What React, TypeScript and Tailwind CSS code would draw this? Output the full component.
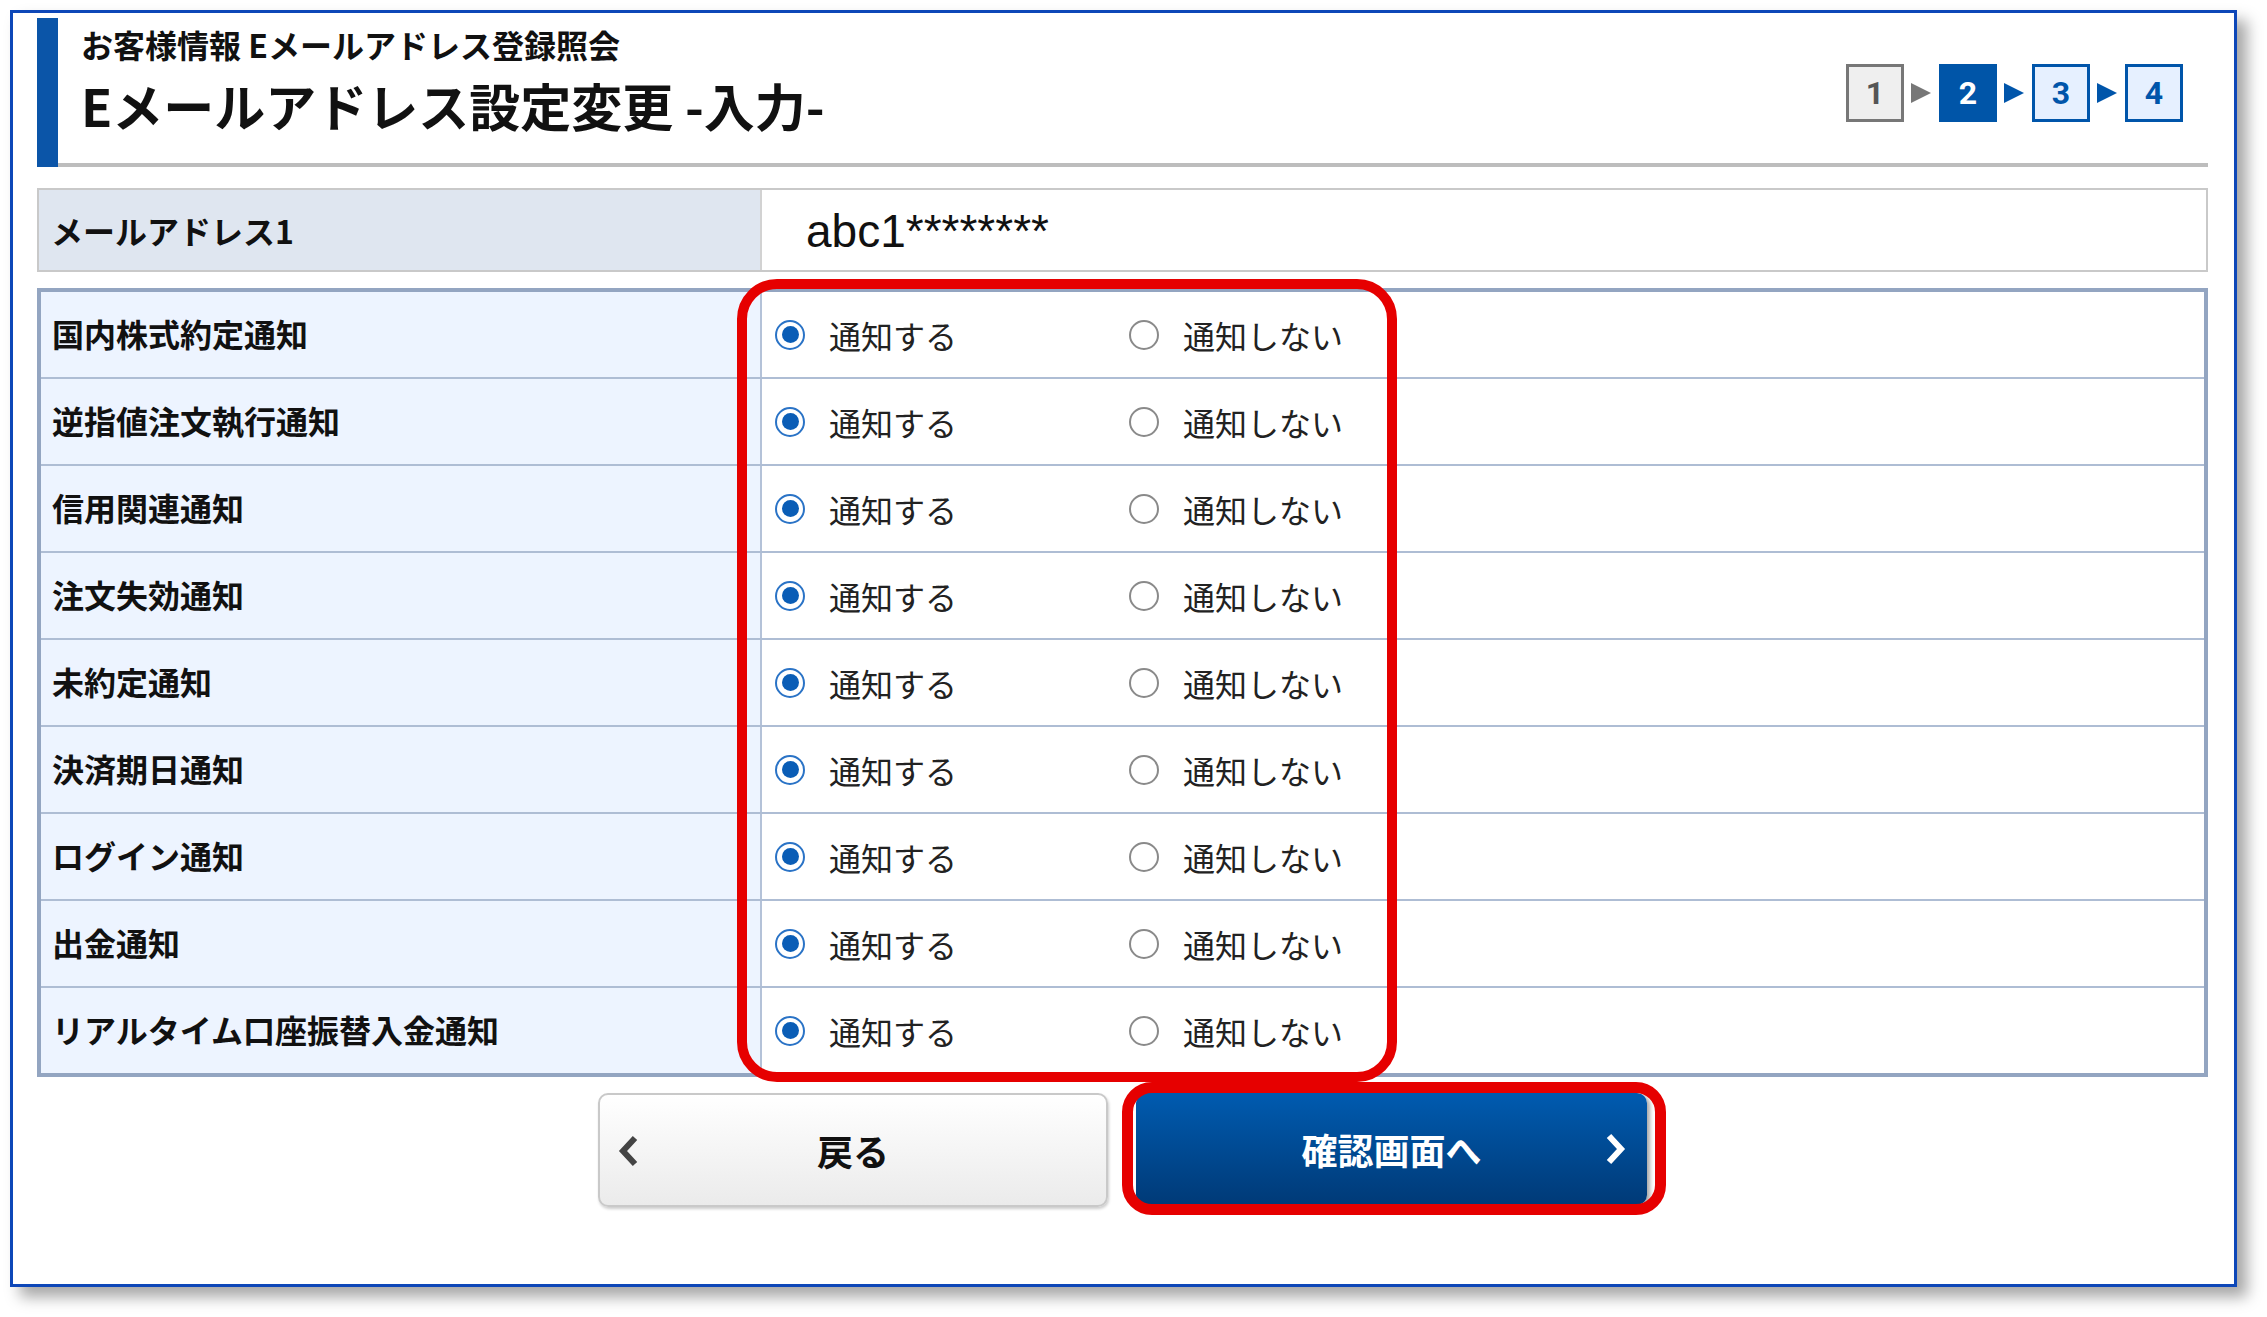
const rows = [
  '国内株式約定通知',
  '逆指値注文執行通知',
  '信用関連通知',
  '注文失効通知',
  '未約定通知',
  '決済期日通知',
  'ログイン通知',
  '出金通知',
  'リアルタイム口座振替入金通知',
];

function Radio({ checked }: { checked: boolean }) {
  if (checked) {
    return (
      <span className="flex h-[30px] w-[30px] shrink-0 items-center justify-center rounded-full border-2 border-[#2a73c6] bg-white">
        <span className="h-[17px] w-[17px] rounded-full bg-[#0a5db6]" />
      </span>
    );
  }
  return <span className="h-[30px] w-[30px] shrink-0 rounded-full border-2 border-[#8a8a8a] bg-white" />;
}

function Arrow({ color }: { color: string }) {
  return (
    <svg width="20" height="20" viewBox="0 0 20 20" className="ml-[7px] mr-[8px]">
      <polygon points="0,0 20,10 0,20" fill={color} />
    </svg>
  );
}

function Steps() {
  return (
    <div className="mt-[46px] flex items-center self-start font-['Roboto','Liberation_Sans',sans-serif] text-[32px] font-bold">
      <div className="flex h-[58px] w-[58px] items-center justify-center border-[3px] border-[#777] bg-[#efefef] text-[#555]">1</div>
      <Arrow color="#777" />
      <div className="flex h-[58px] w-[58px] items-center justify-center bg-[#0055a8] text-white">2</div>
      <Arrow color="#0055aa" />
      <div className="flex h-[58px] w-[58px] items-center justify-center border-[3px] border-[#0055aa] bg-[#e6f0ff] text-[#0055aa]">3</div>
      <Arrow color="#0055aa" />
      <div className="flex h-[58px] w-[58px] items-center justify-center border-[3px] border-[#0055aa] bg-[#e6f0ff] text-[#0055aa]">4</div>
    </div>
  );
}

export default function App() {
  return (
    <div className="min-h-screen bg-white font-['Noto_Sans_CJK_JP',sans-serif] text-[#111]">
      <div className="relative ml-[10px] mt-[10px] h-[1277px] w-[2227px] border-[3px] border-[#0d47b8] bg-white pl-[24px] pr-[26px] pt-[5px] shadow-[10px_10px_14px_rgba(0,0,0,0.35)]">
        {/* header */}
        <div className="flex h-[149px]">
          <div className="w-[21px] bg-[#0b55a8]" />
          <div className="flex flex-1 justify-between border-b-4 border-[#bdbdbd] pl-[23px] pr-[25px]">
            <div className="pt-[7px]">
              <div className="text-[32px] font-bold leading-[38px]">お客様情報 Eメールアドレス登録照会</div>
              <div className="mt-[13px] text-[51px] font-bold leading-[58px]">Eメールアドレス設定変更 -入力-</div>
            </div>
            <Steps />
          </div>
        </div>

        {/* email */}
        <div className="mt-[21px] flex h-[84px] border-2 border-[#c9c9c9]">
          <div className="flex w-[723px] items-center border-r-2 border-[#d2d2d2] bg-[#dfe6f0] pl-[12px] text-[32px] font-bold">
            メールアドレス1
          </div>
          <div className="flex items-center pl-[44px] pt-[3px] font-['Liberation_Sans',sans-serif] text-[46px] text-[#111]">
            abc1********
          </div>
        </div>

        {/* settings */}
        <div className="mt-[16px] border-4 border-[#93a5c1]">
          {rows.map((label, i) => (
            <div key={label} className={`flex ${i > 0 ? 'h-[87px] border-t-2 border-[#aebdd4]' : 'h-[85px]'}`}>
              <div className="flex w-[721px] items-center border-r-2 border-[#b4c2d8] bg-[#edf4ff] pb-[3px] pl-[11px] text-[32px] font-bold">
                {label}
              </div>
              <div className="flex flex-1 items-center pl-[13px] text-[32px] text-[#222]">
                <label className="flex w-[354px] items-center gap-[24px]">
                  <Radio checked />
                  <span>通知する</span>
                </label>
                <label className="flex items-center gap-[24px]">
                  <Radio checked={false} />
                  <span>通知しない</span>
                </label>
              </div>
            </div>
          ))}
        </div>

        {/* buttons */}
        <div className="mt-[16px] flex justify-center gap-[28px]">
          <button className="relative flex h-[114px] w-[510px] items-center justify-center rounded-[10px] border-2 border-[#c9c9c9] bg-gradient-to-b from-white to-[#ebebeb] text-[36px] font-bold text-[#111] shadow-[1px_2px_3px_rgba(0,0,0,0.2)]">
            <svg width="22" height="32" viewBox="0 0 22 32" className="absolute left-[17px] top-[40px]">
              <polyline points="18,3 6,16 18,29" fill="none" stroke="#444" strokeWidth="6" />
            </svg>
            戻る
          </button>
          <button className="relative flex h-[112px] w-[511px] items-center justify-center rounded-[10px] bg-gradient-to-b from-[#005bb0] to-[#003a77] text-[36px] font-bold text-white shadow-[3px_2px_4px_rgba(0,0,0,0.35)]">
            確認画面へ
            <svg width="22" height="32" viewBox="0 0 22 32" className="absolute right-[20px] top-[40px]">
              <polyline points="4,3 16,16 4,29" fill="none" stroke="#fff" strokeWidth="6" />
            </svg>
          </button>
        </div>

        {/* annotations */}
        <div className="pointer-events-none absolute left-[724px] top-[266px] h-[803px] w-[660px] rounded-[40px] border-[10px] border-[#e60000]" />
        <div className="pointer-events-none absolute left-[1109px] top-[1069px] h-[133px] w-[544px] rounded-[30px] border-[11px] border-[#e60000]" />
      </div>
    </div>
  );
}
